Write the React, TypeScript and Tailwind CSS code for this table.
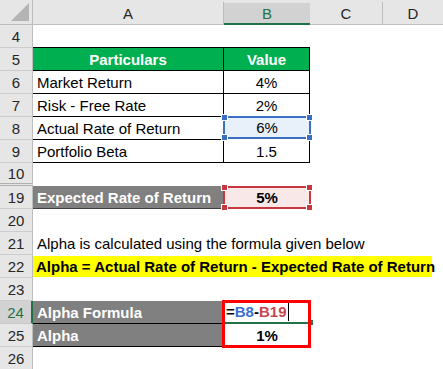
import React from 'react';

const font = "font-['Liberation_Sans',Arial,sans-serif]";

function Handles({ tone }: { tone: 'blue' | 'red' }) {
  const c =
    tone === 'blue'
      ? 'absolute w-[7px] h-[7px] bg-[#3a6fc4] border border-white'
      : 'absolute w-[7px] h-[7px] bg-[#c6373f] border border-white';
  return (
    <>
      <span className={`${c} -left-[4px] -top-[4px]`} />
      <span className={`${c} -right-[4px] -top-[4px]`} />
      <span className={`${c} -left-[4px] -bottom-[4px]`} />
      <span className={`${c} -right-[4px] -bottom-[4px]`} />
    </>
  );
}

function RowHead({ n, active, gap }: { n: number; active?: boolean; gap?: boolean }) {
  if (active) {
    return (
      <div className="w-[33px] shrink-0 h-full flex items-center justify-center bg-[#d2d2d2] text-[#217346] border-b border-b-[#c8c8c8] border-r-2 border-r-[#217346]">
        {n}
      </div>
    );
  }
  return (
    <div
      className={`w-[33px] shrink-0 h-full flex items-center justify-center bg-[#e6e6e6] text-[#262626] border-r border-r-[#bdbdbd] ${
        gap ? 'border-b-[3px] border-double border-b-[#b0b0b0]' : 'border-b border-b-[#cdcdcd]'
      }`}
    >
      {n}
    </div>
  );
}

function Row({ children }: { children: React.ReactNode }) {
  return <div className="flex h-[23px] items-stretch">{children}</div>;
}

const A = 'w-[191px] shrink-0 h-full flex items-center';
const B = 'w-[86px] shrink-0 h-full flex items-center justify-center';

function DataRow({ n, label, value }: { n: number; label: string; value: string }) {
  return (
    <Row>
      <RowHead n={n} />
      <div className={`${A} pl-[4px] border-r border-b border-black`}>{label}</div>
      <div className={`${B} border-r border-b border-black`}>{value}</div>
    </Row>
  );
}

export default function App() {
  return (
    <div className={`${font} w-[443px] h-[369px] overflow-hidden bg-white text-[15px] text-black leading-none`}>
      {/* column headers */}
      <div className="flex h-[25px] bg-[#e6e6e6] border-b border-[#bdbdbd]">
        <div className="w-[33px] shrink-0 relative border-r border-[#bdbdbd]">
          <svg className="absolute right-[3px] bottom-[3px]" width="18" height="18" viewBox="0 0 18 18">
            <polygon points="18,0 18,18 0,18" fill="#b4b4b4" />
          </svg>
        </div>
        <div className="w-[191px] shrink-0 flex items-end">
          <div className="w-full h-[22px] flex items-center justify-center text-[#262626] border-r border-[#bdbdbd]">A</div>
        </div>
        <div className="w-[86px] shrink-0 flex items-end">
          <div className="w-full h-[22px] flex items-center justify-center bg-[#d2d2d2] text-[#217346] border-b-2 border-[#217346] -mb-[1px]">B</div>
        </div>
        <div className="w-[73px] shrink-0 flex items-end">
          <div className="w-full h-[22px] flex items-center justify-center text-[#262626] border-r border-[#bdbdbd]">C</div>
        </div>
        <div className="flex-1 flex items-end">
          <div className="w-full h-[22px] flex items-center justify-center text-[#262626]">D</div>
        </div>
      </div>

      <Row>
        <RowHead n={4} />
        <div className={`${A} border-b border-black`} />
        <div className={`${B} border-b border-black`} />
      </Row>
      <Row>
        <RowHead n={5} />
        <div className={`${A} justify-center bg-[#00b050] text-white font-bold border-r border-b border-black`}>Particulars</div>
        <div className={`${B} bg-[#00b050] text-white font-bold border-r border-b border-black`}>Value</div>
      </Row>
      <DataRow n={6} label="Market Return" value="4%" />
      <DataRow n={7} label="Risk - Free Rate" value="2%" />
      <Row>
        <RowHead n={8} />
        <div className={`${A} pl-[4px] border-r border-b border-black`}>Actual Rate of Return</div>
        <div className={`${B} relative bg-[#e8f0fa] border-2 border-[#3a6fc4] -ml-[1px] w-[88px] -mt-[1px] h-[24px]`}>
          6%
          <Handles tone="blue" />
        </div>
      </Row>
      <DataRow n={9} label="Portfolio Beta" value="1.5" />
      <Row>
        <RowHead n={10} gap />
        <div className="flex-1" />
      </Row>
      <Row>
        <RowHead n={19} />
        <div className={`${A} pl-[4px] bg-[#808080] text-white font-bold border-r border-b border-[#404040]`}>Expected Rate of Return</div>
        <div className={`${B} relative bg-[#f8e8e8] font-bold border-2 border-[#c6373f] -ml-[1px] w-[88px]`}>
          5%
          <Handles tone="red" />
        </div>
      </Row>
      <Row>
        <RowHead n={20} />
        <div className="flex-1" />
      </Row>
      <Row>
        <RowHead n={21} />
        <div className="flex-1 flex items-center pl-[4px] whitespace-nowrap">Alpha is calculated using the formula given below</div>
      </Row>
      <Row>
        <RowHead n={22} />
        <div className="flex-1 flex items-center">
          <span className="h-[21px] w-[399px] flex items-center pl-[3px] bg-[#ffff00] font-bold whitespace-nowrap">
            Alpha = Actual Rate of Return - Expected Rate of Return
          </span>
        </div>
      </Row>
      <Row>
        <RowHead n={23} />
        <div className="flex-1" />
      </Row>
      <Row>
        <RowHead n={24} active />
        <div className={`${A} pl-[4px] bg-[#808080] text-white font-bold border-r border-b border-black`}>Alpha Formula</div>
        <div className={`${B} relative justify-start pl-[2px] font-bold border-b-2 border-[#217346]`}>
          <span>=</span>
          <span className="text-[#3c6fd2]">B8</span>
          <span>-</span>
          <span className="text-[#c8464f]">B19</span>
          <span className="ml-[2px] w-px h-[19px] bg-black" />
          <span className="absolute -right-[3px] -bottom-[3px] w-[5px] h-[5px] bg-[#217346]" />
          <span className="absolute -left-[2px] -top-[1px] w-[89px] h-[48px] border-[3px] border-[#ff0000]" />
        </div>
      </Row>
      <Row>
        <RowHead n={25} />
        <div className={`${A} pl-[4px] bg-[#808080] text-white font-bold border-r border-b border-black`}>Alpha</div>
        <div className={`${B} font-bold`}>1%</div>
      </Row>
      <Row>
        <RowHead n={26} />
        <div className="flex-1" />
      </Row>
    </div>
  );
}
